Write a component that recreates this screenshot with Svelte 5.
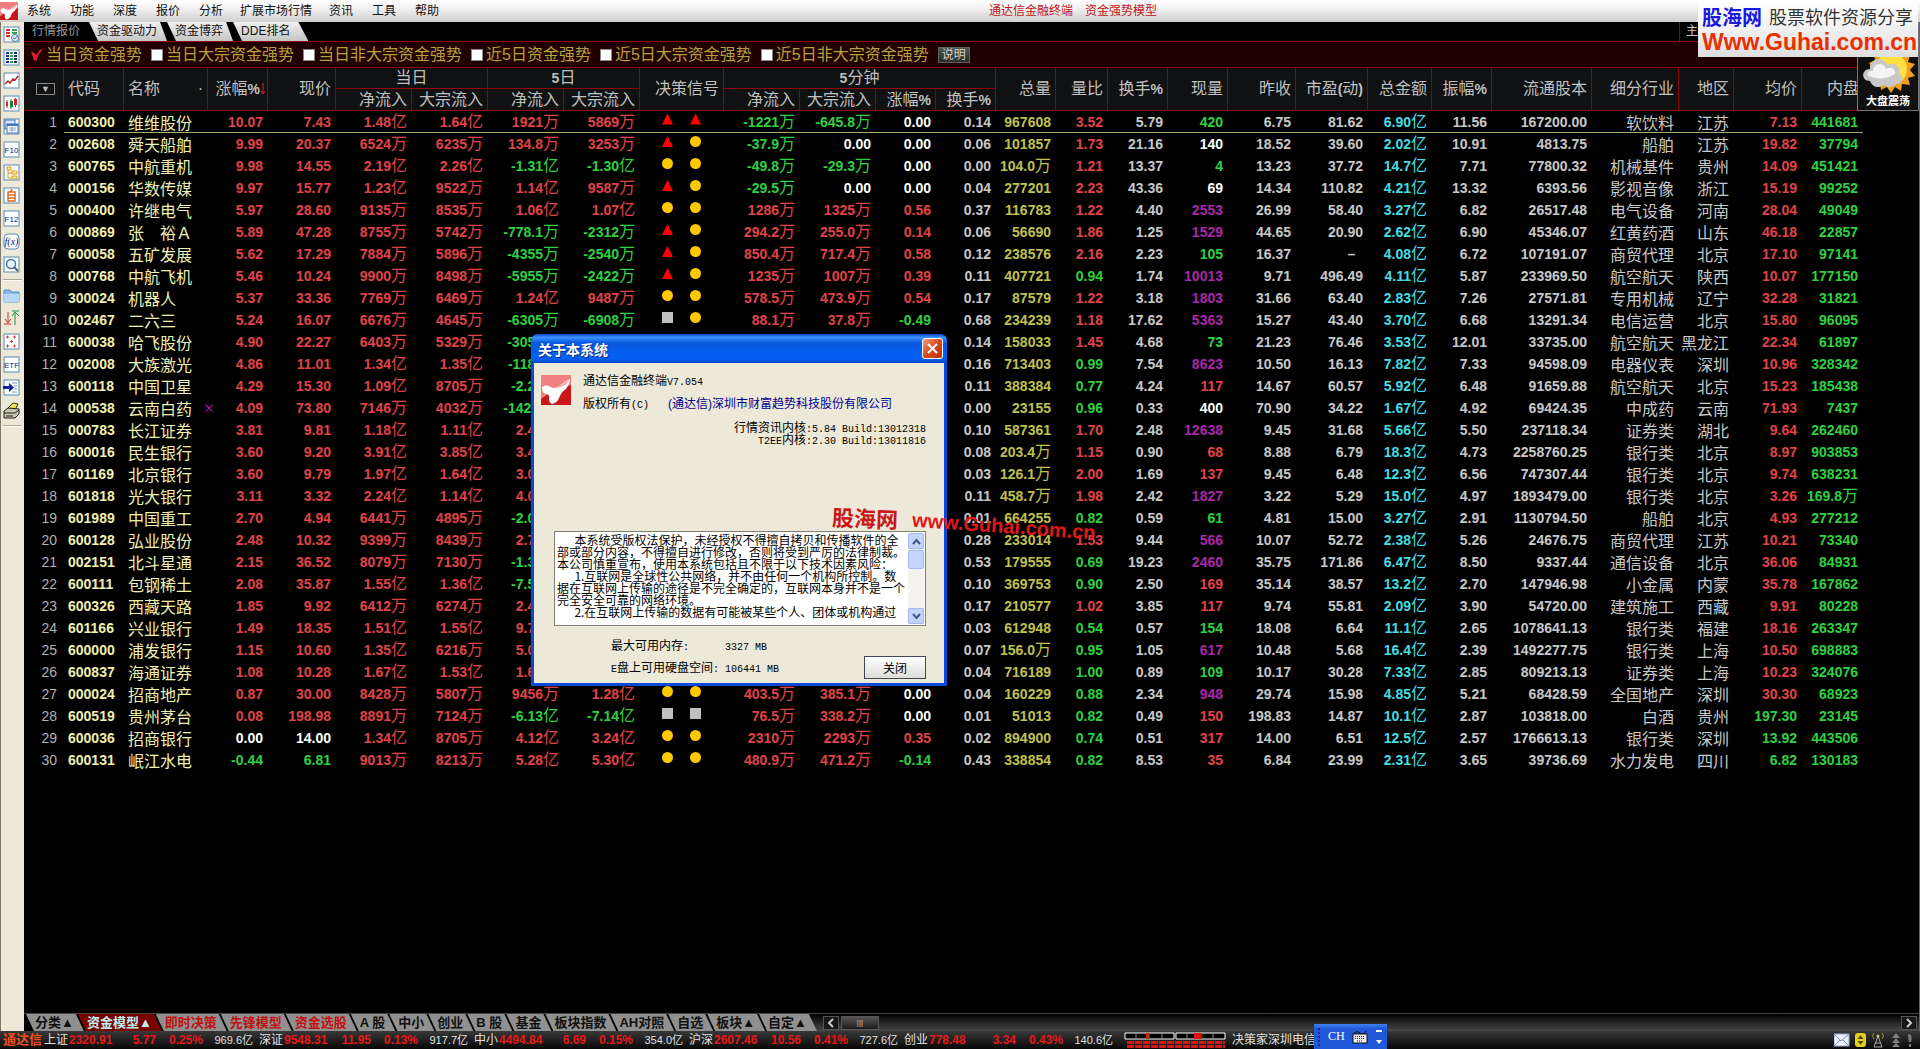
<script lang="ts">
    const menus = ['系统', '功能', '深度', '报价', '分析', '扩展市场行情', '资讯', '工具', '帮助'];
    const pages = ['行情报价', '资金驱动力', '资金博弈', 'DDE排名'];
    const icons = ['report', 'list', 'line', 'candle', 'windows', 'F10', 'tree', 'self', 'F12', 'fx', 'search', '-', 'folder', 'sort', 'dots', 'ETF', 'goto', 'print', '-'];

    let filters = $state([
        { label: '当日资金强势', on: true },
        { label: '当日大宗资金强势', on: false },
        { label: '当日非大宗资金强势', on: false },
        { label: '近5日资金强势', on: false },
        { label: '近5日大宗资金强势', on: false },
        { label: '近5日非大宗资金强势', on: false }
    ]);

    const widths = [40, 60, 84, 60, 68, 76, 76, 76, 76, 84, 76, 76, 60, 60, 60, 52, 60, 60, 68, 72, 64, 60, 100, 87, 55, 68, 61];

    // 代码 名称 涨幅 现价 | 当日 | 5日 | 信号 | 5分钟 | 总量 量比 换手 现量 昨收 市盈 总金额 振幅 股本 行业 地区 均价 内盘
    const quotes = `600300,维维股份,10.07,7.43,1.48亿,1.64亿,1921万,5869万,uu,-1221万,-645.8万,0.00,0.14,967608,3.52,5.79,g420,6.75,81.62,6.90亿,11.56,167200.00,软饮料,江苏,7.13,441681
002608,舜天船舶,9.99,20.37,6524万,6235万,134.8万,3253万,uc,-37.9万,0.00,0.00,0.06,101857,1.73,21.16,w140,18.52,39.60,2.02亿,10.91,4813.75,船舶,江苏,19.82,37794
600765,中航重机,9.98,14.55,2.19亿,2.26亿,-1.31亿,-1.30亿,cc,-49.8万,-29.3万,0.00,0.00,104.0万,1.21,13.37,g4,13.23,37.72,14.7亿,7.71,77800.32,机械基件,贵州,14.09,451421
000156,华数传媒,9.97,15.77,1.23亿,9522万,1.14亿,9587万,uc,-29.5万,0.00,0.00,0.04,277201,2.23,43.36,w69,14.34,110.82,4.21亿,13.32,6393.56,影视音像,浙江,15.19,99252
000400,许继电气,5.97,28.60,9135万,8535万,1.06亿,1.07亿,cc,1286万,1325万,0.56,0.37,116783,1.22,4.40,p2553,26.99,58.40,3.27亿,6.82,26517.48,电气设备,河南,28.04,49049
000869,张　裕Ａ,5.89,47.28,8755万,5742万,-778.1万,-2312万,uc,294.2万,255.0万,0.14,0.06,56690,1.86,1.25,p1529,44.65,20.90,2.62亿,6.90,45346.07,红黄药酒,山东,46.18,22857
600058,五矿发展,5.62,17.29,7884万,5896万,-4355万,-2540万,uc,850.4万,717.4万,0.58,0.12,238576,2.16,2.23,g105,16.37,–\u00a0\u00a0,4.08亿,6.72,107191.07,商贸代理,北京,17.10,97141
000768,中航飞机,5.46,10.24,9900万,8498万,-5955万,-2422万,uc,1235万,1007万,0.39,0.11,407721,0.94,1.74,p10013,9.71,496.49,4.11亿,5.87,233969.50,航空航天,陕西,10.07,177150
300024,机器人,5.37,33.36,7769万,6469万,1.24亿,9487万,cc,578.5万,473.9万,0.54,0.17,87579,1.22,3.18,p1803,31.66,63.40,2.83亿,7.26,27571.81,专用机械,辽宁,32.28,31821
002467,二六三,5.24,16.07,6676万,4645万,-6305万,-6908万,sc,88.1万,37.8万,-0.49,0.68,234239,1.18,17.62,p5363,15.27,43.40,3.70亿,6.68,13291.34,电信运营,北京,15.80,96095
600038,哈飞股份,4.90,22.27,6403万,5329万,-3051万,,,,,,0.14,158033,1.45,4.68,g73,21.23,76.46,3.53亿,12.01,33735.00,航空航天,黑龙江,22.34,61897
002008,大族激光,4.86,11.01,1.34亿,1.35亿,-1182万,,,,,,0.16,713403,0.99,7.54,p8623,10.50,16.13,7.82亿,7.33,94598.09,电器仪表,深圳,10.96,328342
600118,中国卫星,4.29,15.30,1.09亿,8705万,-2.20亿,,,,,,0.11,388384,0.77,4.24,r117,14.67,60.57,5.92亿,6.48,91659.88,航空航天,北京,15.23,185438
000538,云南白药,4.09,73.80,7146万,4032万,-142.6万,,,,,,0.00,23155,0.96,0.33,w400,70.90,34.22,1.67亿,4.92,69424.35,中成药,云南,71.93,7437
000783,长江证券,3.81,9.81,1.18亿,1.11亿,2.44亿,,,,,,0.10,587361,1.70,2.48,p12638,9.45,31.68,5.66亿,5.50,237118.34,证券类,湖北,9.64,262460
600016,民生银行,3.60,9.20,3.91亿,3.85亿,3.40亿,,,,,,0.08,203.4万,1.15,0.90,r68,8.88,6.79,18.3亿,4.73,2258760.25,银行类,北京,8.97,903853
601169,北京银行,3.60,9.79,1.97亿,1.64亿,3.00亿,,,,,,0.03,126.1万,2.00,1.69,r137,9.45,6.48,12.3亿,6.56,747307.44,银行类,北京,9.74,638231
601818,光大银行,3.11,3.32,2.24亿,1.14亿,4.00亿,,,,,,0.11,458.7万,1.98,2.42,p1827,3.22,5.29,15.0亿,4.97,1893479.00,银行类,北京,3.26,169.8万
601989,中国重工,2.70,4.94,6441万,4895万,-2.00亿,,,,,,0.01,664255,0.82,0.59,g61,4.81,15.00,3.27亿,2.91,1130794.50,船舶,北京,4.93,277212
600128,弘业股份,2.48,10.32,9399万,8439万,2.70亿,,,,,,0.28,233014,1.53,9.44,p566,10.07,52.72,2.38亿,5.26,24676.75,商贸代理,江苏,10.21,73340
002151,北斗星通,2.15,36.52,8079万,7130万,-1.30亿,,,,,,0.53,179555,0.69,19.23,p2460,35.75,171.86,6.47亿,8.50,9337.44,通信设备,北京,36.06,84931
600111,包钢稀土,2.08,35.87,1.55亿,1.36亿,-7.50亿,,,,,,0.10,369753,0.90,2.50,r169,35.14,38.57,13.2亿,2.70,147946.98,小金属,内蒙,35.78,167862
600326,西藏天路,1.85,9.92,6412万,6274万,2.40亿,,,,,,0.17,210577,1.02,3.85,r117,9.74,55.81,2.09亿,3.90,54720.00,建筑施工,西藏,9.91,80228
601166,兴业银行,1.49,18.35,1.51亿,1.55亿,9.70亿,,,,,,0.03,612948,0.54,0.57,g154,18.08,6.64,11.1亿,2.65,1078641.13,银行类,福建,18.16,263347
600000,浦发银行,1.15,10.60,1.35亿,6216万,5.00亿,,,,,,0.07,156.0万,0.95,1.05,p617,10.48,5.68,16.4亿,2.39,1492277.75,银行类,上海,10.50,698883
600837,海通证券,1.08,10.28,1.67亿,1.53亿,1.60亿,,,,,,0.04,716189,1.00,0.89,g109,10.17,30.28,7.33亿,2.85,809213.13,证券类,上海,10.23,324076
000024,招商地产,0.87,30.00,8428万,5807万,9456万,1.28亿,cc,403.5万,385.1万,0.00,0.04,160229,0.88,2.34,p948,29.74,15.98,4.85亿,5.21,68428.59,全国地产,深圳,30.30,68923
600519,贵州茅台,0.08,198.98,8891万,7124万,-6.13亿,-7.14亿,ss,76.5万,338.2万,0.00,0.01,51013,0.82,0.49,r150,198.83,14.87,10.1亿,2.87,103818.00,白酒,贵州,197.30,23145
600036,招商银行,0.00,14.00,1.34亿,8705万,4.12亿,3.24亿,cc,2310万,2293万,0.35,0.02,894900,0.74,0.51,r317,14.00,6.51,12.5亿,2.57,1766613.13,银行类,深圳,13.92,443506
600131,岷江水电,-0.44,6.81,9013万,8213万,5.28亿,5.30亿,cc,480.9万,471.2万,-0.14,0.43,338854,0.82,8.53,r35,6.84,23.99,2.31亿,3.65,39736.69,水力发电,四川,6.82,130183`
        .split('\n')
        .map((line) => line.split(','));

    const volumeColors: Record<string, string> = { g: 'down', w: 'flat', r: 'up', p: 'big' };

    function sign(n: number) {
        return n > 0 ? 'up' : n < 0 ? 'down' : 'flat';
    }

    function cellClass(row: string[], i: number) {
        if (i === 0) return 'code';
        if (i === 1) return 'code cjk';
        if (i === 3) return sign(parseFloat(row[2]));
        if (i === 2 || (i >= 4 && i <= 11)) return sign(parseFloat(row[i]));
        if (i === 13) return 'total';
        if (i === 14) return parseFloat(row[i]) > 1 ? 'up' : 'down';
        if (i === 16) return volumeColors[row[i][0]];
        if (i === 19) return 'amount';
        if (i === 22 || i === 23) return 'cjk';
        if (i === 24) return sign(parseFloat(row[i]) - parseFloat(row[17]));
        if (i === 25) return 'down';
        return '';
    }

    const bottomTabs = ['分类▲', '资金模型▲', '即时决策', '先锋模型', '资金选股', 'A 股', '中小', '创业', 'B 股', '基金', '板块指数', 'AH对照', '自选', '板块▲', '自定▲'];

    const indexes = [
        ['上证', '2320.91', '5.77', '0.25%', '969.6亿'],
        ['深证', '9548.31', '11.95', '0.13%', '917.7亿'],
        ['中小', '4494.84', '6.69', '0.15%', '354.0亿'],
        ['沪深', '2607.46', '10.56', '0.41%', '727.6亿'],
        ['创业', '778.48', '3.34', '0.43%', '140.6亿']
    ];

    const license = `　  本系统受版权法保护，未经授权不得擅自拷贝和传播软件的全
部或部分内容，不得擅自进行修改，否则将受到严厉的法律制裁。
本公司慎重宣布，使用本系统包括且不限于以下技术因素风险：
　  1.互联网是全球性公共网络，并不由任何一个机构所控制。数
据在互联网上传输的途径是不完全确定的，互联网本身并不是一个
完全安全可靠的网络环境。
　  2.在互联网上传输的数据有可能被某些个人、团体或机构通过`;

    let showAbout = $state(true);
</script>

{#snippet num(text: string)}
    {#if text.endsWith('万') || text.endsWith('亿')}{text.slice(0, -1)}<span class="unit">{text.slice(-1)}</span>{:else}{text}{/if}
{/snippet}

{#snippet logo(size: number)}
    <svg width={size} height={size} viewBox="0 0 30 30">
        <rect width="30" height="30" fill="#c8181c" />
        <path d="M0 0h30v10Q12 14 0 24z" fill="#f08080" />
        <path d="M1 12C8 8 9 13 13 13S22 7 29 4C28 14 23 14 20 19s-2 8-9 10c-6-3 0-8-5-10-4 0-5-3-5-7z" fill="#fff" />
        <path d="M14 14C18 10 23 8 28 5c-2 6-8 7-14 9z" fill="#f4b0b0" />
    </svg>
{/snippet}

{#snippet toolIcon(name: string)}
    <svg width="17" height="17" viewBox="0 0 17 17">
        {#if name !== 'folder' && name !== 'sort' && name !== 'print'}
            <rect x="1" y="1" width="15" height="15" rx={name === 'fx' ? 4 : 0} fill="#fff" stroke="#5a8ab8" />
        {/if}
        {#if name === 'report'}
            <path d="M3 4h4M3 7h4M3 10h4" stroke="#d03030" stroke-width="2" />
            <path d="M9 4h5M9 7h5" stroke="#30a050" stroke-width="2" />
            <circle cx="12" cy="12" r="3.5" fill="#e8f0f8" stroke="#5878a0" /><path d="M10 12l2 1 3-4" stroke="#5878a0" fill="none" />
        {:else if name === 'list'}
            <path d="M3 4h3M3 7h3M3 10h3M3 13h3" stroke="#203090" stroke-width="2" />
            <path d="M7 4h3M7 7h3M7 10h3M7 13h3" stroke="#30a050" stroke-width="2" />
            <path d="M11 4h3M11 7h3M11 10h3M11 13h3" stroke="#203060" stroke-width="2" />
        {:else if name === 'line'}
            <path d="M2 12l3-3 2 2 3-4 2 1 3-4" fill="none" stroke="#b03030" stroke-width="1.5" />
        {:else if name === 'candle'}
            <path d="M4 5v8M12.500 3v9" stroke="#d02020" /><path d="M8 4v10" stroke="#108040" />
            <path d="M3 7h2v4H3zM11 4h3v6h-3z" fill="#e02020" /><path d="M7 6h3v6H7z" fill="#108040" />
        {:else if name === 'windows'}
            <rect x="2" y="2" width="10" height="9" fill="#d8e8ff" stroke="#4070b8" />
            <rect x="4" y="6" width="11" height="9" fill="#fff" stroke="#4070b8" />
            <path d="M4 7h11" stroke="#4070b8" stroke-width="2" /><path d="M6 10h7M6 12h7M9 9v5" stroke="#88a8d0" />
        {:else if name === 'F10' || name === 'F12' || name === 'ETF'}
            <text x="8.500" y="12" text-anchor="middle" class="icon-text">{name}</text>
        {:else if name === 'tree'}
            <path d="M4 3h4v3H4zM9 7h5v3H9zM9 12h5v3H9z" fill="#fff0b0" stroke="#d09820" /><path d="M5 6v8h4M5 9h4" stroke="#d09820" fill="none" />
        {:else if name === 'self'}
            <path d="M5 5h7v9H5zM5 8h7M5 11h7M9 2L8 5" fill="none" stroke="#e06820" stroke-width="1.500" />
        {:else if name === 'fx'}
            <text x="8.500" y="12" text-anchor="middle" class="icon-text fx">f(x)</text>
        {:else if name === 'search'}
            <circle cx="8" cy="8" r="4.500" fill="#e8f4ff" stroke="#4878a8" stroke-width="1.500" /><path d="M11 11l4 4" stroke="#506070" stroke-width="2" />
        {:else if name === 'folder'}
            <path d="M1 3h6l2 2h7v10H1z" fill="#8ab8e8" stroke="#5890c8" /><path d="M1 7h15v8H1z" fill="#b8d8f8" />
        {:else if name === 'sort'}
            <path d="M5 2v10M2 9l3 4 3-4M1 14h7" fill="none" stroke="#d03030" />
            <path d="M12 3v12M9 6l3-4 4 4M9 1h7" fill="none" stroke="#209048" />
        {:else if name === 'dots'}
            <path d="M3 4h3M4.500 2.500v3M10 4h3M11.500 2.500v3M7 8.500h3M8.500 7v3M3 13h3M4.500 11.500v3M10 13h3M11.500 11.500v3" stroke="#d04040" />
        {:else if name === 'goto'}
            <path d="M9 4h5M11 7h3M11 10h3M9 13h5" stroke="#7898c0" /><path d="M0 7h6V4l5 4.500L6 13v-3H0z" fill="#1020a0" />
        {:else if name === 'print'}
            <path d="M5 6l5-5 5 1-3 6z" fill="#f0e060" stroke="#303000" />
            <path d="M1 9l4-3 11 1v5l-4 4H1z" fill="#c8c8b0" stroke="#202020" /><path d="M1 11h11l4-3M3 14h7" stroke="#202020" fill="none" />
        {/if}
    </svg>
{/snippet}

<div class="app">
    <header class="menubar">
        {@render logo(18)}
        <nav>
            {#each menus as item}
                <button>{item}</button>
            {/each}
        </nav>
        <div class="title"><span>通达信金融终端</span><span>资金强势模型</span></div>
    </header>

    <div class="body">
        <aside class="toolbar">
            {#each icons as icon}
                {#if icon === '-'}
                    <hr />
                {:else}
                    <button aria-label={icon}>{@render toolIcon(icon)}</button>
                {/if}
            {/each}
        </aside>

        <main>
            <div class="pages">
                {#each pages as page, i}
                    <button class:current={i === 0} class:last={i === 3}>{page}</button>
                {/each}
                <span class="home">主站</span>
            </div>

            <div class="filters">
                {#each filters as filter}
                    <label><input type="checkbox" bind:checked={filter.on} />{filter.label}</label>
                {/each}
                <button>说明</button>
            </div>

            <div class="grid">
                <table>
                    <colgroup>
                        {#each widths as w}
                            <col style="width: {w}px" />
                        {/each}
                    </colgroup>
                    <thead>
                        <tr>
                            <th rowspan="2" class="pick"><button class="drop" aria-label="选择栏目">▼</button></th>
                            <th rowspan="2" class="left">代码</th>
                            <th rowspan="2" class="left"><div class="name-head">名称<span>·</span></div></th>
                            <th rowspan="2" class="sorted">
                                <div>涨幅<b>%</b><svg width="6" height="14" viewBox="0 0 6 14"><path d="M3 1v11M1 9l2 3 2-3" fill="none" stroke="#e02020" /></svg></div>
                            </th>
                            <th rowspan="2">现价</th>
                            <th colspan="2" class="group">当日</th>
                            <th colspan="2" class="group"><b>5</b>日</th>
                            <th rowspan="2">决策信号</th>
                            <th colspan="4" class="group"><b>5</b>分钟</th>
                            <th rowspan="2">总量</th>
                            <th rowspan="2">量比</th>
                            <th rowspan="2">换手<b>%</b></th>
                            <th rowspan="2">现量</th>
                            <th rowspan="2">昨收</th>
                            <th rowspan="2">市盈<b>(</b>动<b>)</b></th>
                            <th rowspan="2">总金额</th>
                            <th rowspan="2">振幅<b>%</b></th>
                            <th rowspan="2">流通股本</th>
                            <th rowspan="2">细分行业</th>
                            <th rowspan="2">地区</th>
                            <th rowspan="2">均价</th>
                            <th rowspan="2">内盘</th>
                        </tr>
                        <tr>
                            <th>净流入</th>
                            <th>大宗流入</th>
                            <th>净流入</th>
                            <th>大宗流入</th>
                            <th>净流入</th>
                            <th>大宗流入</th>
                            <th>涨幅<b>%</b></th>
                            <th>换手<b>%</b></th>
                        </tr>
                    </thead>
                    <tbody>
                        {#each quotes as row, r}
                            <tr class:selected={r === 0}>
                                <td class="index">{r + 1}</td>
                                {#each row as cell, i}
                                    {#if i === 8}
                                        <td>
                                            <div class="signals">
                                                {#each cell as s}
                                                    <i class={s === 'u' ? 'triangle' : s === 'c' ? 'dot' : 'square'}></i>
                                                {/each}
                                            </div>
                                        </td>
                                    {:else if i === 1 && row[0] === '000538'}
                                        <td class="code cjk"><div class="name-head">{cell}<span class="mark">×</span></div></td>
                                    {:else}
                                        <td class={cellClass(row, i)}>{@render num(i === 16 ? cell.slice(1) : cell)}</td>
                                    {/if}
                                {/each}
                            </tr>
                        {/each}
                    </tbody>
                </table>
            </div>

            <div class="bottom">
                <div class="sheets">
                    {#each bottomTabs as tab, i}
                        <button class:active={i === 1} class:hot={i > 1 && i < 5}>{tab}</button>
                    {/each}
                </div>
                <div class="scroll">
                    <button aria-label="向左"><svg width="8" height="10" viewBox="0 0 8 10"><path d="M6 1L2 5l4 4" /></svg></button>
                    <span class="thumb">|||</span>
                    <button class="end" aria-label="向右"><svg width="8" height="10" viewBox="0 0 8 10"><path d="M2 1l4 4-4 4" /></svg></button>
                </div>
            </div>

            <div class="weather">
                <svg width="56" height="46" viewBox="0 0 56 46">
                    <path d="M31 0l4 6 6-4 1 7 8-1-2 7 7 2-5 6 5 6-7 2 2 7-8-1-1 7-6-4-4 6-4-6-6 3-1-7-7 1 1-7-6-3 5-5-4-6 6-3-1-7 7 1 2-7 5 4z" fill="#f0a020" />
                    <circle cx="31" cy="22" r="16" fill="#ffe040" />
                    <path d="M10 34c-9 0-9-12 0-12-1-11 14-13 17-4 7-4 15 2 12 9 6 2 4 11-3 10-4 4-9 4-12 1-5 4-12 2-14-4z" fill="#c8c8c8" />
                    <path d="M12 30c-7-1-5-7 1-6 0-8 11-9 13-2 5-3 10 0 9 5-6 4-15 6-23 3z" fill="#f4f4f4" />
                </svg>
                <span>大盘震荡</span>
            </div>
        </main>
    </div>

    <footer class="status">
        <strong class="brand">通达信</strong>
        {#each indexes as [name, price, delta, pct, amount]}
            <div class="index-item">
                <span class="name">{name}</span><b>{price}</b><b class="r">{delta}</b><b class="r">{pct}</b><span class="r">{amount}</span>
            </div>
        {/each}
        <svg class="meter" width="110" height="16" viewBox="0 0 110 16">
            <path d="M6 1h49v6H6zM57 1h49v6H57z" fill="#000" stroke="#fff" />
            <path d="M17 1v6M43 1v6M68 1v6M94 1v6" stroke="#888" />
            <path d="M27 1h3v6h-3zM75 1h7v6h-7z" fill="#e01010" /><path d="M30 2v5M83 2v5" stroke="#10a020" />
            <path d="M8 10.500h98M8 14.500h98" stroke="#d81818" stroke-width="3" stroke-dasharray="7 1" />
        </svg>
        <span class="host">决策家深圳电信</span>
        <div class="tray">
            <svg width="86" height="16" viewBox="0 0 86 16">
                <rect x="0" y="2" width="15" height="12" fill="#e8f0ff" stroke="#a0b0d0" /><path d="M0 2l7 7 8-7M0 14l6-6M15 14L9 8" fill="none" stroke="#7890c0" />
                <rect x="21" y="1" width="11" height="14" rx="3" fill="#e0d020" /><path d="M26.500 3l-3 4h6zM26.500 13l-3-4h6z" fill="#505000" />
                <path d="M44 4l-4 11h8zM42 11h4" fill="none" stroke="#aaa" /><circle cx="44" cy="4" r="1.500" fill="#c8c850" />
                <path d="M40 1q-3 3 0 6M48 1q3 3 0 6" fill="none" stroke="#909030" />
                <path d="M62 1l-4 5h8zM62 6l-4 5h8zM62 11l-4 4h8z" fill="#808080" />
                <path d="M75 2q4 0 2 8h-2q-2-8 0-8zM75 12h2v3h-2z" fill="#777" />
            </svg>
        </div>
    </footer>

    <div class="ime">
        <svg width="4" height="20" viewBox="0 0 4 20"><path d="M2 1v18" stroke="#103090" stroke-width="2" stroke-dasharray="2 2" /></svg>
        <span>CH</span>
        <svg width="16" height="14" viewBox="0 0 16 14"><path d="M2 3q3-3 6 0t6-2" fill="none" stroke="#111" /><rect x="1" y="4" width="14" height="9" fill="#eee" stroke="#111" /><path d="M3 6.500h10M3 8.500h10M5 11h6" stroke="#222" stroke-dasharray="1 1" /></svg>
        <svg width="8" height="18" viewBox="0 0 8 18"><path d="M1 3h6" stroke="#fff" stroke-width="2" /><path d="M1 12h6l-3 4z" fill="#fff" /></svg>
    </div>

    {#if showAbout}
        <div class="about" role="dialog" aria-label="关于本系统">
            <div class="titlebar">
                <span>关于本系统</span>
                <button aria-label="关闭窗口" onclick={() => (showAbout = false)}>
                    <svg width="13" height="13" viewBox="0 0 13 13"><path d="M2 2l9 9M11 2l-9 9" stroke="#fff" stroke-width="2" /></svg>
                </button>
            </div>
            <div class="about-body">
                <div class="product">
                    {@render logo(30)}
                    <div>
                        <p>通达信金融终端<code>V7.054</code></p>
                        <p>版权所有<code>(C)</code><a href="#about">(通达信)深圳市财富趋势科技股份有限公司</a></p>
                    </div>
                </div>
                <p class="kernel">行情资讯内核<code>:5.84 Build:13012318</code></p>
                <p class="kernel"><code>T2EE</code>内核<code>:2.30 Build:13011816</code></p>
                <div class="license">
                    <textarea readonly aria-label="版权声明" value={license}></textarea>
                    <div class="xp-scroll">
                        <button aria-label="上"><svg width="9" height="7" viewBox="0 0 9 7"><path d="M1 6l3.500-4L8 6" /></svg></button>
                        <span></span>
                        <button class="end" aria-label="下"><svg width="9" height="7" viewBox="0 0 9 7"><path d="M1 1l3.500 4L8 1" /></svg></button>
                    </div>
                </div>
                <div class="about-foot">
                    <dl>
                        <dt>最大可用内存<code>:</code></dt><dd><code>3327 MB</code></dd>
                        <dt><code>E</code>盘上可用硬盘空间<code>:</code></dt><dd><code>106441 MB</code></dd>
                    </dl>
                    <button onclick={() => (showAbout = false)}>关闭</button>
                </div>
            </div>
        </div>
    {/if}

    <div class="stamp stamp-name">股海网</div>
    <div class="stamp stamp-url">www.Guhai.com.cn</div>

    <div class="banner">
        <div><strong>股海网</strong><em>股票软件资源分享</em></div>
        <b>Www.Guhai.com.cn</b>
    </div>
</div>

<style>
    :global(body) {
        margin: 0;
        background: #000;
        overflow: hidden;
    }

    .app {
        position: relative;
        display: flex;
        flex-direction: column;
        height: 100vh;
        overflow: hidden;
        font-family: 'Liberation Sans', 'Noto Sans CJK SC', sans-serif;
        font-size: 12px;
        color: #c8c8c8;
    }

    button {
        margin: 0;
        padding: 0;
        border: none;
        background: none;
        font: inherit;
        color: inherit;
        white-space: nowrap;
    }

    svg {
        display: block;
        flex: none;
    }

    /* 菜单栏 */
    .menubar {
        display: flex;
        align-items: center;
        flex: none;
        height: 22px;
        background: linear-gradient(#fff, #f0f0f0 40%, #cfcfcf);
        color: #111;
        line-height: 20px;
    }

    .menubar nav {
        display: flex;
        gap: 15px;
        margin-left: 7px;
    }

    .menubar nav button {
        min-width: 28px;
    }

    .title {
        display: flex;
        gap: 12px;
        margin-left: 548px;
        color: #c01418;
    }

    .body {
        display: flex;
        flex: 1;
        min-height: 0;
    }

    .toolbar {
        box-sizing: border-box;
        width: 24px;
        flex: none;
        padding-top: 1px;
        border-left: 1px solid #807868;
        background: #ece9d8;
    }

    .toolbar button {
        display: flex;
        align-items: center;
        justify-content: center;
        width: 21px;
        height: 23px;
    }

    .toolbar hr {
        margin: 3px 2px 3px;
        border: none;
        border-top: 1px solid #aca899;
        border-bottom: 1px solid #fff;
    }

    .icon-text {
        font: 8px 'Liberation Sans', sans-serif;
        fill: #102080;
    }

    .icon-text.fx {
        font: italic 10px 'Liberation Serif', serif;
    }

    main {
        position: relative;
        display: flex;
        flex-direction: column;
        flex: 1;
        min-width: 0;
        border-right: 1px solid #666;
    }

    .pages {
        display: flex;
        flex: none;
        height: 19px;
        line-height: 19px;
    }

    .pages button {
        padding: 0 10px 0 8px;
        background: linear-gradient(#f0f0f0, #c4c4c4);
        color: #111;
        clip-path: polygon(0 0, calc(100% - 7px) 0, 100% 100%, 9px 100%);
    }

    .pages button.current {
        padding: 0 9px 0 8px;
        background: #000;
        color: #999;
        clip-path: none;
    }

    .pages button.last {
        padding-right: 18px;
        clip-path: polygon(0 0, calc(100% - 10px) 0, 100% 100%, 9px 100%);
    }

    .home {
        width: 240px;
        margin-left: auto;
        box-sizing: border-box;
        padding-left: 6px;
        border-left: 1px solid #900;
    }

    .filters {
        display: flex;
        align-items: center;
        gap: 9px;
        flex: none;
        height: 25px;
        padding-left: 7px;
        border-top: 1px solid #900010;
        background: #200000;
        color: #b8a038;
        font-size: 16px;
        line-height: 24px;
    }

    .filters label {
        display: flex;
        align-items: center;
        gap: 3px;
    }

    .filters input {
        appearance: none;
        box-sizing: border-box;
        width: 12px;
        height: 12px;
        margin: 0;
        border: 1px solid #888;
        background: #fff;
    }

    .filters input:checked {
        border: none;
        background: #e02020;
        clip-path: polygon(0 25%, 30% 40%, 45% 55%, 75% 10%, 100% 0, 65% 50%, 45% 100%, 25% 100%);
    }

    .filters button {
        padding: 0 3px;
        border: 1px solid #606060;
        background: linear-gradient(#505850, #282c28);
        color: #d0d0d0;
        font-size: 12px;
        line-height: 14px;
    }

    /* 行情表 */
    .grid {
        flex: 1;
        min-height: 0;
        overflow: hidden;
    }

    table {
        width: 1839px;
        table-layout: fixed;
        border-collapse: separate;
        border-spacing: 0;
        font-size: 14px;
        font-weight: bold;
    }

    th,
    td {
        box-sizing: border-box;
        height: 22px;
        padding: 0 5px 0 0;
        line-height: 20px;
        text-align: right;
        white-space: nowrap;
    }

    th {
        padding-right: 4px;
        border-right: 1px solid #900010;
        border-bottom: 1px solid #900010;
        background: #101112;
        color: #c0c0c0;
        font-size: 16px;
        font-weight: normal;
    }

    thead tr:first-child th {
        border-top: 1px solid #900010;
    }

    th:last-child {
        border-right: none;
    }

    thead tr:last-child th:last-child {
        border-right: 1px solid #900010;
    }

    th b {
        font-size: 14px;
    }

    th.left {
        padding-left: 4px;
        text-align: left;
    }

    th.group {
        padding: 0;
        text-align: center;
    }

    th.pick {
        padding: 0 0 0 4px;
        text-align: center;
    }

    th.sorted {
        padding: 0 1px 0 0;
    }

    .sorted div {
        display: flex;
        align-items: center;
        justify-content: flex-end;
    }

    .drop {
        display: block;
        width: 19px;
        margin: 0 auto;
        border: 1px solid #888;
        font-size: 9px;
        line-height: 10px;
    }

    .name-head {
        display: flex;
        justify-content: space-between;
    }

    .name-head .mark {
        margin-right: -12px;
        color: #c020c0;
        font-size: 12px;
    }

    td.index {
        padding-right: 7px;
        color: #b0b0b0;
        font-weight: normal;
    }

    td.code {
        padding-left: 4px;
        color: #f0f0b0;
        text-align: left;
    }

    td.cjk,
    .unit {
        font-family: 'Noto Sans CJK SC', sans-serif;
        font-size: 16px;
        font-weight: normal;
    }

    .unit {
        line-height: 1;
    }

    td.up {
        color: #e04448;
    }

    td.down {
        color: #30d040;
    }

    td.flat {
        color: #fff;
    }

    td.big {
        color: #a828a8;
    }

    td.total {
        color: #c0c050;
    }

    td.amount {
        color: #48dce4;
    }

    tr.selected td:not(.index) {
        border-bottom: 1px solid #a8b070;
    }

    .signals {
        display: flex;
        justify-content: center;
        gap: 17px;
        padding: 0 0 5px 4px;
    }

    .signals i {
        width: 11px;
        height: 11px;
    }

    .triangle {
        background: #f00;
        clip-path: polygon(50% 0, 100% 100%, 0 100%);
    }

    .dot {
        border-radius: 50%;
        background: #ffc800;
    }

    .square {
        background: #c0c0c0;
    }

    /* 底部分类 */
    .bottom {
        display: flex;
        flex: none;
        height: 17px;
        border-top: 1px solid #444;
        background: linear-gradient(#000, #484848);
    }

    .sheets {
        display: flex;
        padding-left: 2px;
        background: #000;
        font-size: 13px;
        font-weight: bold;
        line-height: 17px;
        color: #111;
    }

    .sheets button {
        padding: 0 11px 0 9px;
        margin-right: -7px;
        background: #909090;
        clip-path: polygon(0 0, calc(100% - 9px) 0, calc(100% - 1px) 100%, 8px 100%);
    }

    .sheets button.active {
        background: #780000;
        color: #c0f0f0;
    }

    .sheets button.hot {
        color: #c01010;
    }

    .scroll {
        display: flex;
        align-items: center;
        flex: 1;
        gap: 2px;
        padding: 0 2px 0 12px;
    }

    .scroll button {
        display: flex;
        align-items: center;
        justify-content: center;
        width: 16px;
        height: 14px;
        border: 1px solid #555;
        background: #181818;
    }

    .scroll path {
        fill: none;
        stroke: #ccc;
        stroke-width: 2;
    }

    .thumb {
        width: 36px;
        border: 1px solid #555;
        background: linear-gradient(#555, #1c1c1c);
        font-size: 8px;
        line-height: 12px;
        text-align: center;
    }

    .scroll .end {
        margin-left: auto;
    }

    .weather {
        position: absolute;
        top: 0;
        right: 0;
        box-sizing: border-box;
        display: flex;
        flex-direction: column;
        align-items: center;
        justify-content: flex-end;
        width: 62px;
        height: 89px;
        border: 1px solid #777;
        background: #101010;
        color: #fff;
        font-size: 11px;
        font-weight: bold;
        line-height: 17px;
    }

    .status {
        display: flex;
        align-items: center;
        flex: none;
        height: 18px;
        padding-left: 3px;
        background: linear-gradient(#383838, #080808);
        color: #e0e0e0;
        line-height: 18px;
        white-space: nowrap;
    }

    .brand {
        width: 41px;
        color: #f05020;
        font-size: 13px;
    }

    .index-item {
        display: grid;
        grid-template-columns: 25px 45px 42px 47px 50px;
        margin-right: 6px;
    }

    .index-item b {
        color: #e81818;
    }

    .index-item .r {
        text-align: right;
    }

    .index-item span.r {
        font-size: 11px;
    }

    .host {
        margin-left: 3px;
    }

    .tray {
        margin: 0 0 0 auto;
    }

    .ime {
        position: absolute;
        left: 1314px;
        bottom: 0;
        display: flex;
        align-items: center;
        gap: 7px;
        box-sizing: border-box;
        width: 73px;
        height: 25px;
        padding-left: 3px;
        background: linear-gradient(#4080f0, #2058d8 20%, #2058d8);
        color: #fff;
        font-family: 'Liberation Serif', serif;
    }

    /* 关于对话框 */
    .about {
        position: absolute;
        left: 531px;
        top: 334px;
        box-sizing: border-box;
        width: 416px;
        padding: 0 3px 3px;
        border-radius: 7px 7px 0 0;
        background: #0a48d8;
        color: #000;
    }

    .about code {
        font: 10px 'Liberation Mono', monospace;
        line-height: 1;
    }

    .titlebar {
        display: flex;
        align-items: center;
        justify-content: space-between;
        height: 29px;
        margin: 0 -3px;
        padding: 0 4px 0 7px;
        border-radius: 7px 7px 0 0;
        background: linear-gradient(#0848c8, #3c90ff 12%, #0858e0 30%, #0460f8 85%, #0848c0);
        color: #fff;
        font-size: 14px;
        font-weight: bold;
        text-shadow: 1px 1px #0a2878;
    }

    .titlebar button {
        display: flex;
        align-items: center;
        justify-content: center;
        box-sizing: border-box;
        width: 21px;
        height: 21px;
        border: 1px solid #fff;
        border-radius: 3px;
        background: linear-gradient(135deg, #f0a088, #d84820 50%, #b83010);
    }

    .about-body {
        padding: 12px 18px 4px 20px;
        background: #ece9d8;
    }

    .about p {
        height: 12px;
        margin: 0;
        line-height: 12px;
        white-space: pre;
    }

    .product {
        display: flex;
        gap: 12px;
        margin-left: -13px;
    }

    .product p + p {
        margin: 11px 0 12px;
    }

    .product a {
        margin-left: 19px;
        color: #000090;
        text-decoration: none;
    }

    .kernel {
        text-align: right;
    }

    .license {
        display: flex;
        box-sizing: border-box;
        height: 95px;
        margin-top: 85px;
        border: 1px solid #808070;
        background: #fff;
    }

    textarea {
        flex: 1;
        min-width: 0;
        margin: 0;
        padding: 2px 0 0 2px;
        border: none;
        outline: none;
        resize: none;
        overflow: hidden;
        white-space: pre;
        background: #fff;
        color: #000;
        font: 12px 'Noto Sans CJK SC', sans-serif;
        line-height: 12px;
    }

    .xp-scroll {
        display: flex;
        flex-direction: column;
        gap: 1px;
        width: 16px;
        margin: 1px;
        background: #f4f3ee;
    }

    .xp-scroll button,
    .xp-scroll span {
        display: flex;
        align-items: center;
        justify-content: center;
        box-sizing: border-box;
        height: 16px;
        border: 1px solid #a0b8f0;
        border-radius: 2px;
        background: #c4d4fc;
    }

    .xp-scroll span {
        height: 19px;
    }

    .xp-scroll .end {
        margin-top: auto;
    }

    .xp-scroll path {
        fill: none;
        stroke: #40588c;
        stroke-width: 2;
    }

    .about-foot {
        display: flex;
        align-items: flex-end;
        justify-content: space-between;
        padding: 9px 0 0 57px;
    }

    dl {
        display: grid;
        grid-template-columns: 114px auto;
        margin: 0;
        line-height: 22px;
    }

    dd {
        margin: 0;
    }

    .about-foot button {
        box-sizing: border-box;
        width: 62px;
        height: 23px;
        border: 1px solid #404858;
        background: linear-gradient(#fff, #dcdcd8);
    }

    .stamp {
        position: absolute;
        color: #e01818;
        white-space: nowrap;
    }

    .stamp-name {
        left: 832px;
        top: 503px;
        color: #c81818;
        font: bold 22px 'Noto Sans CJK SC', sans-serif;
        line-height: 28px;
        transform: rotate(2deg);
    }

    .stamp-url {
        left: 912px;
        top: 514px;
        font-size: 20px;
        font-weight: bold;
        line-height: 24px;
        transform: rotate(4deg);
    }

    .banner {
        position: absolute;
        top: 0;
        right: 2px;
        box-sizing: border-box;
        width: 220px;
        height: 57px;
        padding: 5px 0 0 4px;
        background: linear-gradient(#fff, #f4f4f4 40%, #dedede);
        white-space: nowrap;
    }

    .banner div {
        display: flex;
        gap: 7px;
        line-height: 27px;
    }

    .banner strong {
        color: #1818e0;
        font-size: 20px;
    }

    .banner em {
        color: #333;
        font-size: 18px;
        font-style: normal;
    }

    .banner b {
        display: block;
        color: #e83000;
        font-size: 23px;
        line-height: 20px;
    }
</style>
